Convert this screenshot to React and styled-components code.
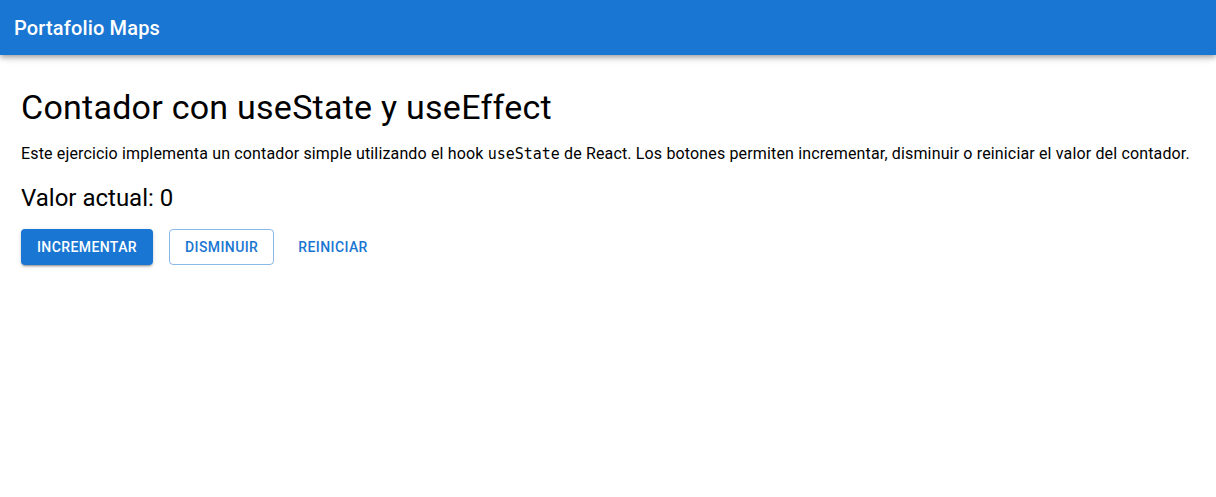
import React, { useState } from "react";
import styled, { createGlobalStyle } from "styled-components";

const GlobalStyle = createGlobalStyle`
  body {
    margin: 0;
    background: #fff;
    font-family: Roboto, "Liberation Sans", sans-serif;
    color: #000;
  }
`;

const AppBar = styled.header`
  display: flex;
  align-items: center;
  height: 55px;
  padding: 0 14px;
  background-color: #1976d2;
  color: #fff;
  box-shadow: 0 2px 4px -1px rgba(0, 0, 0, 0.2), 0 4px 5px 0 rgba(0, 0, 0, 0.14),
    0 1px 10px 0 rgba(0, 0, 0, 0.12);
`;

const Brand = styled.h1`
  margin: 0;
  font-size: 20px;
  font-weight: 500;
  letter-spacing: 0.15px;
`;

const Main = styled.main`
  padding: 32px 21px;
`;

const Title = styled.h2`
  margin: 0 0 13px;
  font-size: 34px;
  font-weight: 400;
  line-height: 1.235;
  letter-spacing: 0.25px;
`;

const Text = styled.p`
  margin: 0 0 16px;
  font-size: 16px;
  line-height: 1.5;
  letter-spacing: 0.15px;
`;

const Code = styled.code`
  font-family: "DejaVu Sans Mono", monospace;
  font-size: 15px;
  letter-spacing: 0;
`;

const Value = styled.h3`
  margin: 0 0 15px;
  font-size: 24px;
  font-weight: 400;
  line-height: 1.334;
`;

const Actions = styled.div`
  display: flex;
  gap: 16px;
`;

const Button = styled.button`
  height: 36px;
  padding: 0 ${(p) => (p.$variant === "outlined" ? "15px" : p.$variant === "text" ? "8px" : "16px")};
  font-family: Roboto, "Liberation Sans", sans-serif;
  font-size: 14px;
  font-weight: 500;
  letter-spacing: 0.4px;
  text-transform: uppercase;
  border-radius: 4px;
  cursor: pointer;
  border: ${(p) =>
    p.$variant === "outlined" ? "1px solid rgba(25, 118, 210, 0.5)" : "none"};
  background: ${(p) => (p.$variant === "contained" ? "#1976d2" : "transparent")};
  color: ${(p) => (p.$variant === "contained" ? "#fff" : "#1976d2")};
  box-shadow: ${(p) =>
    p.$variant === "contained"
      ? "0 3px 1px -2px rgba(0,0,0,0.2), 0 2px 2px 0 rgba(0,0,0,0.14), 0 1px 5px 0 rgba(0,0,0,0.12)"
      : "none"};
`;

export default function App() {
  const [count, setCount] = useState(0);

  return (
    <>
      <GlobalStyle />
      <AppBar>
        <Brand>Portafolio Maps</Brand>
      </AppBar>
      <Main>
        <Title>Contador con useState y useEffect</Title>
        <Text>
          Este ejercicio implementa un contador simple utilizando el hook{" "}
          <Code>useState</Code> de React. Los botones permiten incrementar,
          disminuir o reiniciar el valor del contador.
        </Text>
        <Value>Valor actual: {count}</Value>
        <Actions>
          <Button $variant="contained" onClick={() => setCount(count + 1)}>
            Incrementar
          </Button>
          <Button $variant="outlined" onClick={() => setCount(count - 1)}>
            Disminuir
          </Button>
          <Button $variant="text" onClick={() => setCount(0)}>
            Reiniciar
          </Button>
        </Actions>
      </Main>
    </>
  );
}
